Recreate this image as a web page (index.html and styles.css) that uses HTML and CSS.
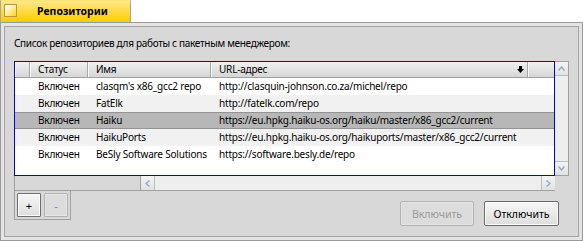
FILE: index.html
```html
<!DOCTYPE html>
<html lang="ru">
<head>
  <meta charset="UTF-8" />
  <title>Репозитории</title>
  <link rel="stylesheet" href="styles.css">
</head>
<body>
  <div class="tab">
    <span class="close-box"></span>
    <span class="tab-title">Репозитории</span>
  </div>
  <div class="window">
    <div class="frame">
      <p class="intro">Список репозиториев для работы с пакетным менеджером:</p>

      <div class="scroll-view">
        <div class="list">
          <div class="row head">
            <span></span>
            <span>Статус</span>
            <span>Имя</span>
            <span class="sort-col">URL-адрес
              <svg class="sort-arrow" width="7" height="7" viewBox="0 0 7 7"><path d="M2 0h3v3h2L3.5 7 0 3h2z" fill="#000"/></svg>
            </span>
            <span></span>
          </div>
          <div class="row">
            <span></span><span>Включен</span><span>clasqm's x86_gcc2 repo</span><span>http://clasquin-johnson.co.za/michel/repo</span><span></span>
          </div>
          <div class="row alt">
            <span></span><span>Включен</span><span>FatElk</span><span>http://fatelk.com/repo</span><span></span>
          </div>
          <div class="row selected">
            <span></span><span>Включен</span><span>Haiku</span><span>https://eu.hpkg.haiku-os.org/haiku/master/x86_gcc2/current</span><span></span>
          </div>
          <div class="row alt">
            <span></span><span>Включен</span><span>HaikuPorts</span><span>https://eu.hpkg.haiku-os.org/haikuports/master/x86_gcc2/current</span><span></span>
          </div>
          <div class="row">
            <span></span><span>Включен</span><span>BeSly Software Solutions</span><span>https://software.besly.de/repo</span><span></span>
          </div>
        </div>

        <div class="vscroll">
          <span class="arrow-btn up"><svg width="7" height="5" viewBox="0 0 7 5"><polyline points="0.5,4.5 3.5,1 6.5,4.5" /></svg></span>
          <span class="track"></span>
          <span class="arrow-btn down"><svg width="7" height="5" viewBox="0 0 7 5"><polyline points="0.5,0.5 3.5,4 6.5,0.5" /></svg></span>
        </div>

        <div class="hscroll">
          <span class="status"></span>
          <span class="arrow-btn left"><svg width="5" height="7" viewBox="0 0 5 7"><polyline points="4.5,0.5 1,3.5 4.5,6.5" /></svg></span>
          <span class="track"></span>
          <span class="arrow-btn right"><svg width="5" height="7" viewBox="0 0 5 7"><polyline points="0.5,0.5 4,3.5 0.5,6.5" /></svg></span>
        </div>
        <div class="corner"></div>
      </div>

      <div class="bottom">
        <div class="add-remove">
          <button class="small-btn">+</button>
          <button class="small-btn" disabled>-</button>
        </div>
        <div class="actions">
          <button class="btn enable" disabled>Включить</button>
          <button class="btn disable">Отключить</button>
        </div>
      </div>
    </div>
  </div>
</body>
</html>
```

FILE: styles.css
```css
* { box-sizing: border-box; }
body { margin: 0; width: 583px; height: 241px; overflow: hidden; background: #fff; color: #000; font-family: "Noto Sans", "DejaVu Sans", sans-serif; font-size: 10px; letter-spacing: -0.2px; }

.tab { display: flex; align-items: flex-start; width: 131px; height: 22px; padding: 3px 0 0 3px; border: 1px solid #a5a5a5; border-top-color: #ffe27a; border-bottom: none; background: linear-gradient(#ffe888, #ffcb00); }
.close-box { width: 13px; height: 13px; border: 1px solid #b39a3c; background: linear-gradient(135deg, #fff 0%, #fff3c0 35%, #ffd21a 100%); }
.tab-title { margin-left: 20px; font-weight: bold; font-size: 10.5px; line-height: 15px; letter-spacing: 0; }

.window { height: 219px; border: 1px solid #9a9a9a; padding: 3px; background: #e4e4e4; }
.frame { height: 100%; border: 1px solid #a3a3a3; background: #d8d8d8; padding: 0 9px; display: flex; flex-direction: column; }

.intro { margin: 9px 0 11px 0; line-height: 14px; letter-spacing: -0.3px; }

.scroll-view { display: grid; grid-template-columns: 541px 14px; grid-template-rows: 115px 15px; }
.list { border: 1px solid #0000f0; background: #fff; overflow: hidden; }
.row { display: grid; grid-template-columns: 15px 58px 123px 317px 26px; height: 17px; line-height: 17px; white-space: nowrap; }
.row span { padding-left: 8px; }
.row span:first-child, .row span:last-child { padding-left: 0; }
.row.alt { background: #f1f1f1; }
.row.selected { background: #b7b7b7; box-shadow: inset 0 1px #939393, inset 0 -1px #939393; }

.head { height: 16px; line-height: 15px; background: linear-gradient(#f0f0f0, #d6d6d6); border-bottom: 1px solid #a0a0a0; }
.head span { border-right: 1px solid #a6a6a6; box-shadow: inset 1px 0 #fafafa; }
.head span:last-child { border-right: none; }
.sort-col { display: flex; align-items: center; }
.sort-arrow { margin-left: auto; margin-right: 3px; }

.arrow-btn { display: flex; align-items: center; justify-content: center; background: linear-gradient(#f4f4f4, #e2e2e2); }
.arrow-btn polyline { fill: none; stroke: #9ba7b6; stroke-width: 1.4; }
.track { flex: 1; background: #eeeeee; }

.vscroll { display: flex; flex-direction: column; border: 1px solid #a0a0a0; border-left: none; }
.vscroll .arrow-btn { height: 14px; }
.vscroll .up { border-bottom: 1px solid #bdbdbd; }
.vscroll .down { border-top: 1px solid #bdbdbd; }

.hscroll { display: flex; border-left: 1px solid #a0a0a0; border-bottom: 1px solid #a0a0a0; }
.hscroll .status { width: 126px; border-right: 1px solid #a0a0a0; background: #d8d8d8; }
.hscroll .arrow-btn { width: 14px; }
.hscroll .left { border-right: 1px solid #bdbdbd; }
.hscroll .right { border-left: 1px solid #bdbdbd; }

.bottom { display: flex; align-items: flex-start; }
.add-remove { display: flex; gap: 3px; padding: 2px; border: 1px solid #a0a0a0; border-top: none; }
.small-btn { width: 24px; height: 24px; padding: 0; font: inherit; font-size: 11px; color: #000; border: 1px solid #6e6e6e; border-radius: 1px; background: linear-gradient(#f7f7f7, #dedede); box-shadow: inset 0 0 0 1px #fbfbfb; }
.small-btn:disabled { border-color: #b0b0b0; color: #6f86a8; background: #dcdcdc; box-shadow: inset 0 0 0 1px #e6e6e6; }

.actions { display: flex; gap: 10px; margin: 10px 10px 0 auto; }
.btn { height: 25px; padding: 0; font: inherit; font-size: 10.5px; color: #000; border: 1px solid #6a6a6a; border-radius: 2px; background: linear-gradient(#f7f7f7, #dddddd); box-shadow: inset 0 0 0 1px #fbfbfb; }
.btn.enable { width: 74px; }
.btn.disable { width: 75px; }
.btn:disabled { color: #9a9a9a; border-color: #b3b3b3; background: #dcdcdc; box-shadow: inset 0 0 0 1px #e4e4e4; }
```
